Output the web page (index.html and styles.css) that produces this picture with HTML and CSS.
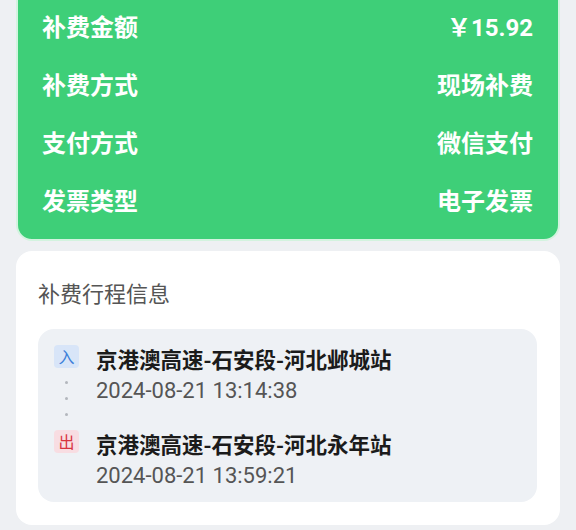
FILE: index.html
```html
<!DOCTYPE html>
<html>
<head>
    <meta charset="utf-8">
    <title>补费详情</title>
    <link rel="stylesheet" href="styles.css">
</head>
<body>

<div class="pay-card">
    <div class="pay-row">
        <span>补费金额</span>
        <span>￥15.92</span>
    </div>
    <div class="pay-row">
        <span>补费方式</span>
        <span>现场补费</span>
    </div>
    <div class="pay-row">
        <span>支付方式</span>
        <span>微信支付</span>
    </div>
    <div class="pay-row">
        <span>发票类型</span>
        <span>电子发票</span>
    </div>
</div>

<div class="trip-card">
    <div class="trip-title">补费行程信息</div>
    <div class="trip-box">
        <div class="trip-item">
            <div class="trip-side">
                <span class="tag tag-in">入</span>
                <span class="dot"></span>
                <span class="dot"></span>
                <span class="dot"></span>
            </div>
            <div class="trip-info">
                <div class="station">京港澳高速-石安段-河北邺城站</div>
                <div class="time">2024-08-21 13:14:38</div>
            </div>
        </div>
        <div class="trip-item">
            <div class="trip-side">
                <span class="tag tag-out">出</span>
            </div>
            <div class="trip-info">
                <div class="station">京港澳高速-石安段-河北永年站</div>
                <div class="time">2024-08-21 13:59:21</div>
            </div>
        </div>
    </div>
</div>

</body>
</html>
```

FILE: styles.css
```css
*{
    padding: 0;
    margin: 0;
    box-sizing: border-box;
}

body{
    width: 576px;
    height: 530px;
    overflow: hidden;
    padding: 0 16px;
    background-color: #eef0f3;
    font-family: Roboto, "Noto Sans CJK SC", sans-serif;
}

/*绿色的补费信息卡片，顶部被页面滚动遮住*/
.pay-card{
    margin-top: -30px;
    padding: 27px 25px 8px 24px;
    background-color: #3ecf78;
    border: 2px solid #d3f3df;
    border-radius: 16px;
    color: #fff;
}

.pay-row{
    display: flex;
    justify-content: space-between;
    height: 58px;
    line-height: 58px;
    font-size: 24px;
    font-weight: bold;
}

/*行程信息*/
.trip-card{
    margin-top: 10px;
    padding: 26px 23px 23px 22px;
    background-color: #fff;
    border-radius: 16px;
}

.trip-title{
    line-height: 30px;
    font-size: 22px;
    color: #555;
    font-family: "Noto Sans CJK SC", sans-serif;
}

.trip-box{
    margin-top: 22px;
    padding: 14px 17px 10px 16px;
    background-color: #eef1f5;
    border-radius: 16px;
}

.trip-item{
    display: flex;
}

.trip-item + .trip-item{
    margin-top: 12px;
}

.trip-side{
    width: 25px;
    margin-right: 17px;
    display: flex;
    flex-direction: column;
    align-items: center;
}

.tag{
    width: 25px;
    height: 23px;
    margin-top: 2px;
    line-height: 23px;
    text-align: center;
    font-size: 16px;
    border-radius: 4px;
    font-family: "Noto Sans CJK SC", sans-serif;
}

.tag-in{
    background-color: #d8e5f8;
    color: #3d7fd9;
}

.tag-out{
    background-color: #f8dde2;
    color: #d8343f;
}

.dot{
    width: 3px;
    height: 3px;
    margin-top: 13px;
    border-radius: 50%;
    background-color: #b3b7bd;
}

.station{
    line-height: 32px;
    font-size: 21.5px;
    font-weight: bold;
    color: #1b1b1b;
    font-family: "Noto Sans CJK SC", sans-serif;
}

.time{
    line-height: 32px;
    font-size: 22px;
    color: #555;
}
```
